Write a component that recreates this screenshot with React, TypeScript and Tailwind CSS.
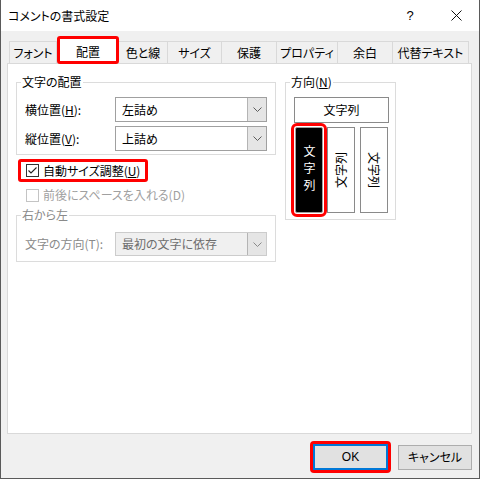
import React from 'react';

const Chevron = ({ color = '#5c5c5c' }: { color?: string }) => (
  <svg width="9" height="5" viewBox="0 0 9 5" fill="none">
    <path d="M0.5 0.5L4.5 4.5L8.5 0.5" stroke={color} strokeWidth="1" />
  </svg>
);

const Combo = ({ value, disabled = false }: { value: string; disabled?: boolean }) => (
  <div
    className={
      disabled
        ? 'flex h-[24px] w-[152px] border border-[#cccccc] bg-[#f0f0f0] text-[#6d6d6d]'
        : 'flex h-[25px] w-[152px] border border-[#a0a0a0] bg-white'
    }
  >
    <div className="flex flex-1 items-center pl-[6px]">{value}</div>
    <div className="flex w-[19px] items-center justify-center border-l border-[#b4b4b4] bg-[#e5e5e5]">
      <Chevron color={disabled ? '#8a8a8a' : '#5c5c5c'} />
    </div>
  </div>
);

const CheckBox = ({ checked, disabled = false }: { checked: boolean; disabled?: boolean }) => (
  <div
    className={
      disabled
        ? 'flex h-[13px] w-[13px] items-center justify-center border border-[#c4c4c4] bg-white'
        : 'flex h-[13px] w-[13px] items-center justify-center border border-[#333333] bg-white'
    }
  >
    {checked && (
      <svg width="11" height="11" viewBox="0 0 11 11" fill="none">
        <path d="M1.5 5.5L4 8L9.5 2.5" stroke="#222" strokeWidth="1.1" />
      </svg>
    )}
  </div>
);

const tabs = [
  { label: 'フォント', w: 'w-[48px]' },
  { label: '配置', w: 'w-[62px]', active: true },
  { label: '色と線', w: 'w-[49px]' },
  { label: 'サイズ', w: 'w-[54px]' },
  { label: '保護', w: 'w-[55px]' },
  { label: 'プロパティ', w: 'w-[61px]' },
  { label: '余白', w: 'w-[55px]' },
  { label: '代替テキスト', w: 'w-[76px]' },
];

export default function App() {
  return (
    <div className="flex h-[479px] w-[480px] flex-col overflow-hidden border-x border-b border-[#5a5a5a] bg-[#f0f0f0] font-['Noto_Sans_CJK_JP','Noto_Sans_CJK_SC',sans-serif] text-[12px] leading-[14px] text-black [font-feature-settings:'palt']">
      {/* title bar */}
      <div className="flex h-[31px] shrink-0 items-center bg-white pl-[7px]">
        <span className="flex-1">コメントの書式設定</span>
        <div className="flex h-full w-[46px] items-center justify-center font-['Liberation_Sans',sans-serif] text-[13px]">?</div>
        <div className="flex h-full w-[46px] items-center justify-center">
          <svg width="11" height="11" viewBox="0 0 11 11" fill="none">
            <path d="M0.5 0.5L10.5 10.5M10.5 0.5L0.5 10.5" stroke="#111" strokeWidth="1" />
          </svg>
        </div>
      </div>

      <div className="flex flex-1 flex-col pl-[6px] pr-[7px] pt-[10px]">
        {/* tabs */}
        <div className="flex h-[22px] items-end pl-[2px]">
          {tabs.map((t, i) =>
            t.active ? (
              <div
                key={t.label}
                className={`relative z-10 -mb-px flex h-[28px] ${t.w} items-center justify-center rounded-[3px] border-[3px] border-[#ff0000] bg-white pt-[3px]`}
              >
                {t.label}
              </div>
            ) : (
              <div
                key={t.label}
                className={`flex h-[22px] ${t.w} items-center justify-center border-t border-r border-[#d9d9d9] ${i === 0 ? 'border-l' : ''}`}
              >
                {t.label}
              </div>
            )
          )}
        </div>

        {/* panel */}
        <div className="flex h-[371px] gap-[9px] border border-[#d9d9d9] bg-white pl-[8px] pt-[11px]">
          <div className="flex w-[260px] flex-col">
            <fieldset className="flex flex-col border border-[#dcdcdc] pb-[3px] pl-[8px] pr-[8px]">
              <legend className="-ml-[4px] px-[1px]">文字の配置</legend>
              <div className="flex flex-col gap-[4px] pt-[8px]">
                <div className="flex items-center">
                  <span className="w-[90px]">
                    横位置(<u>H</u>):
                  </span>
                  <Combo value="左詰め" />
                </div>
                <div className="flex items-center">
                  <span className="w-[90px]">
                    縦位置(<u>V</u>):
                  </span>
                  <Combo value="上詰め" />
                </div>
              </div>
            </fieldset>

            <div className="ml-[2px] mt-[4px] flex h-[23px] items-center gap-[4px] self-start rounded-[3px] border-[3px] border-[#ff0000] pl-[5px] pr-[5px]">
              <CheckBox checked />
              <span>
                自動サイズ調整(<u>U</u>)
              </span>
            </div>

            <div className="mt-[3px] flex h-[20px] items-center gap-[4px] pl-[10px] text-[#a0a0a0]">
              <CheckBox checked={false} disabled />
              <span>前後にスペースを入れる(D)</span>
            </div>

            <fieldset className="mt-[3px] border border-[#dcdcdc] pb-[5px] pl-[8px] pr-[8px] text-[#8a8a8a]">
              <legend className="-ml-[4px] px-[1px]">右から左</legend>
              <div className="flex items-center pt-[10px]">
                <span className="w-[90px]">文字の方向(T):</span>
                <Combo value="最初の文字に依存" disabled />
              </div>
            </fieldset>
          </div>

          <fieldset className="w-[111px] self-start border border-[#dcdcdc] pb-[6px] pl-[8px]">
            <legend className="-ml-[4px] px-[1px]">
              方向(<u>N</u>)
            </legend>
            <div className="pt-[8px]">
              <div className="flex h-[26px] w-[95px] items-center justify-center border border-[#8a8a8a] bg-white">
                文字列
              </div>
              <div className="ml-[1px] mt-[4px] flex">
                <div className="flex h-[86px] w-[28px] items-center justify-center rounded-[2px] border border-[#a0a0a0] bg-black text-white outline-[3px] outline-offset-[1px] outline-[#ff0000] [writing-mode:vertical-rl] tracking-[5px]">
                  文字列
                </div>
                <div className="ml-[4px] flex h-[86px] w-[28px] items-center justify-center border border-[#8a8a8a] bg-white">
                  <span className="-rotate-90 whitespace-nowrap">文字列</span>
                </div>
                <div className="ml-[5px] flex h-[86px] w-[28px] items-center justify-center border border-[#8a8a8a] bg-white">
                  <span className="rotate-90 whitespace-nowrap">文字列</span>
                </div>
              </div>
            </div>
          </fieldset>
        </div>

        {/* footer */}
        <div className="mt-[7px] flex items-center justify-end">
          <div className="rounded-[4px] border-[3px] border-[#ff0000]">
            <div className="flex h-[26px] w-[75px] items-center justify-center border-2 border-[#0078d7] bg-[#e1e1e1] font-['Liberation_Sans',sans-serif]">
              OK
            </div>
          </div>
          <div className="ml-[7px] flex h-[25px] w-[74px] items-center justify-center border border-[#adadad] bg-[#e1e1e1]">
            キャンセル
          </div>
        </div>
      </div>
    </div>
  );
}
